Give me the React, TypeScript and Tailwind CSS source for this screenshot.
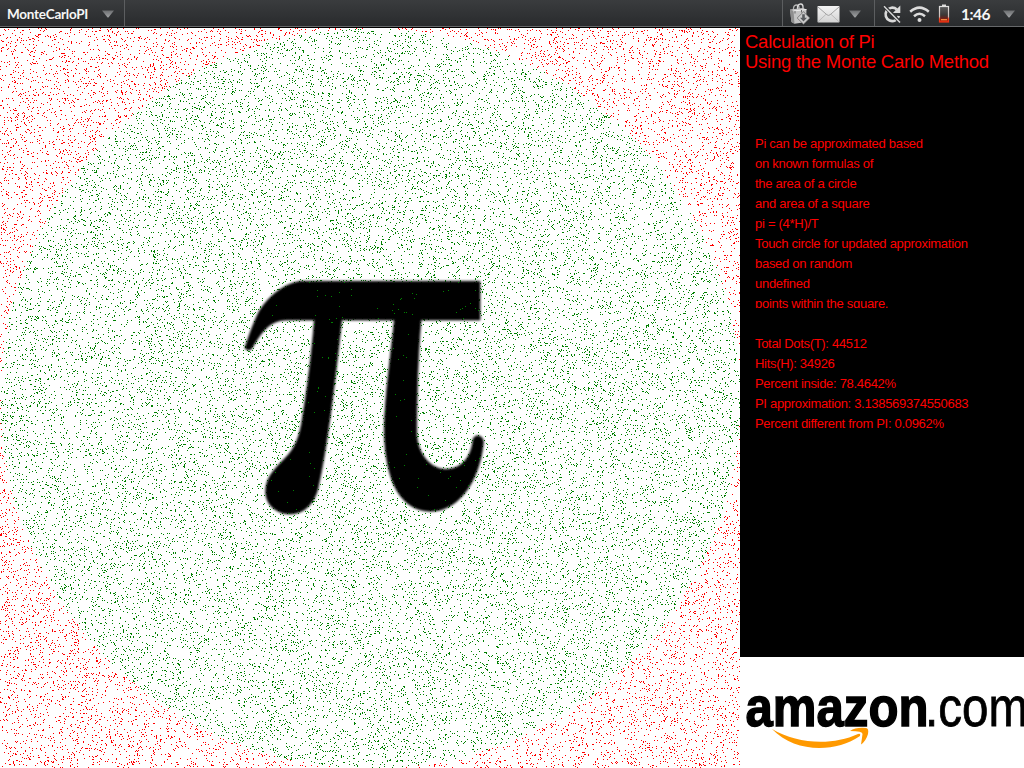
import React from "react";

const SIZE = 740;
const RADIUS = SIZE / 2;

function createRandom(seed: number) {
  let s = seed;
  return () => {
    s = (s + 0x6d2b79f5) | 0;
    let t = Math.imul(s ^ (s >>> 15), 1 | s);
    t = (t + Math.imul(t ^ (t >>> 7), 61 | t)) ^ t;
    return ((t ^ (t >>> 14)) >>> 0) / 4294967296;
  };
}

function sample(count: number, seed: number) {
  const random = createRandom(seed);
  const hits: string[] = [];
  const misses: string[] = [];
  for (let i = 0; i < count; i++) {
    const x = Math.floor(random() * SIZE);
    const y = Math.floor(random() * SIZE);
    const inside = Math.hypot(x - RADIUS, y - RADIUS) <= RADIUS;
    (inside ? hits : misses).push(`M${x} ${y}h1v1h-1z`);
  }
  return { hits: hits.join(""), misses: misses.join("") };
}

const early = sample(36500, 31);
const late = sample(2500, 77);

const PI_PATH =
  "M735 34L195 34C135 45 95 88 72 125C50 170 40 205 30 232C30 241 45 242 50 236C70 205 95 150 155 150L238 150C232 240 215 370 203 440C195 500 180 535 150 565C115 600 92 625 92 665C92 705 125 732 165 732C215 732 245 690 252 640C275 540 300 340 320 150L478 150C470 240 450 370 448 480C450 640 500 722 585 724C680 724 735 620 745 520C748 495 720 490 714 508C710 560 680 598 632 598C580 598 545 540 545 490C545 370 550 240 558 150L735 150Z";

function Board() {
  return (
    <svg className="block h-[740px] w-[740px] shrink-0 bg-white" viewBox="0 0 740 740">
      <defs>
        <filter id="soft" x="-5%" y="-5%" width="110%" height="110%">
          <feGaussianBlur stdDeviation="2.8" />
        </filter>
      </defs>
      <g shapeRendering="crispEdges">
        <path d={early.hits} fill="#008000" />
        <path d={early.misses} fill="#ff0000" />
      </g>
      <g transform="translate(235 242) scale(.33333)">
        <path d={PI_PATH} fill="#000" stroke="#000" strokeWidth="2" filter="url(#soft)" />
      </g>
      <g shapeRendering="crispEdges">
        <path d={late.hits} fill="#008000" />
        <path d={late.misses} fill="#ff0000" />
      </g>
    </svg>
  );
}

function Caret() {
  return (
    <svg className="block h-2 w-3 shrink-0" viewBox="0 0 12 8">
      <defs>
        <linearGradient id="caret" x1="0" y1="0" x2="0" y2="1">
          <stop offset="0" stopColor="#6c6e70" />
          <stop offset="1" stopColor="#a2a4a6" />
        </linearGradient>
      </defs>
      <path d="M0 .5h12L6.6 7.2Q6 7.8 5.4 7.2Z" fill="url(#caret)" />
    </svg>
  );
}

function BagIcon() {
  return (
    <svg className="block h-[22px] w-[22px] shrink-0" viewBox="0 0 22 22">
      <path d="M4.500 8V5Q5 2 7.500 2T10 4.500V7" fill="none" stroke="#b5b5b5" strokeWidth="1.3" />
      <path d="M8.500 6V3.500Q9.500 .8 11.800 1T14 4V7" fill="none" stroke="#d8d8d8" strokeWidth="1.3" />
      <path d="M1 6.500L14 5L17.500 6.500L17 19L5.500 20.800L2.500 19Z" fill="#c4c4c4" />
      <path d="M1 6.500L4.500 8L5.500 20.800L2.500 19Z" fill="#8e8e8e" />
      <path d="M4.500 8L17.500 6.500" stroke="#ededed" />
      <path d="M6 8v2.500M12.500 7v2.500" stroke="#666" />
      <path d="M14.500 8.800L20.800 15L14.500 21.200L8.200 15Z" fill="#cdcdcd" stroke="#6a6a6a" strokeWidth=".8" />
      <path d="M13.200 11.300h2.600v3.500h2.200l-3.500 3.600l-3.500-3.600h2.200Z" fill="#585b5e" />
    </svg>
  );
}

function MailIcon() {
  return (
    <svg className="block h-[17px] w-[23px] shrink-0" viewBox="0 0 23 17">
      <defs>
        <linearGradient id="mail" x1="0" y1="0" x2="0" y2="1">
          <stop offset="0" stopColor="#f4f4f4" />
          <stop offset="1" stopColor="#d2d2d2" />
        </linearGradient>
      </defs>
      <rect x=".5" width="22" height="16.500" rx=".7" fill="url(#mail)" />
      <path d="M1 15.800L9 8.300M22 15.800L14 8.300" stroke="#b5b5b5" strokeWidth=".9" />
      <path d="M1 1L10 8.800Q11.500 10 13 8.800L22 1" fill="none" stroke="#9b9b9b" strokeWidth=".9" />
    </svg>
  );
}

function SyncOffIcon() {
  return (
    <svg className="block h-5 w-5 shrink-0" viewBox="0 0 20 20" fill="none">
      <path d="M14.800 5.400A6.700 6.700 0 1 0 16.800 12" stroke="#dadada" strokeWidth="2.7" />
      <path d="M18.300 1.500V9H10.800Z" fill="#dadada" />
      <path d="M1.500 1.500L18.500 18.500" stroke="#303234" strokeWidth="3.400" />
      <path d="M2 2.200L18 18.500" stroke="#dadada" strokeWidth="1.400" />
    </svg>
  );
}

function WifiIcon() {
  return (
    <svg className="block h-[18px] w-[21px] shrink-0" viewBox="0 0 21 18" fill="none">
      <path d="M1.200 6.800Q10.500-1.500 19.800 6.800M5 11.200Q10.500 6.300 16 11.200" stroke="#dcdcdc" strokeWidth="2.500" />
      <circle cx="10.500" cy="15" r="2" fill="#dcdcdc" />
    </svg>
  );
}

function BatteryIcon() {
  return (
    <svg className="block h-[19px] w-3 shrink-0" viewBox="0 0 12 19">
      <defs>
        <linearGradient id="battery" x1="0" y1="0" x2="0" y2="1">
          <stop offset="0" stopColor="#5a5b5c" />
          <stop offset=".55" stopColor="#3b3836" />
          <stop offset=".75" stopColor="#682019" />
          <stop offset="1" stopColor="#df2709" />
        </linearGradient>
        <linearGradient id="batteryEdge" x1="0" y1="0" x2="0" y2="1">
          <stop offset="0" stopColor="#dedede" />
          <stop offset=".65" stopColor="#cbbab6" />
          <stop offset=".8" stopColor="#ee4220" />
          <stop offset="1" stopColor="#ee3214" />
        </linearGradient>
      </defs>
      <rect x="4" y=".5" width="4" height="2" fill="#ddd" />
      <rect x="1.500" y="2.500" width="9" height="15.500" fill="url(#battery)" stroke="url(#batteryEdge)" strokeWidth="1.200" />
      <path d="M3 15.700h6" stroke="#ff9440" strokeWidth="1.200" />
    </svg>
  );
}

function StatusBar() {
  return (
    <header className="h-7 bg-black font-['Lato',sans-serif] text-[#f6f6f6]">
      <div className="flex h-[27px] items-center border-b border-[#66686a] bg-gradient-to-b from-[#3a3c3e] to-[#292b2d]">
        <div className="flex h-full w-[125px] items-center border-r border-[#5c5e60] pl-[7px] pt-px">
          <span className="w-[95px] whitespace-nowrap text-[13.5px] font-bold leading-5 tracking-[-0.25px]">MonteCarloPI</span>
          <Caret />
        </div>
        <div className="ml-auto flex h-full w-[92px] items-center border-l border-[#5c5e60] pl-1.5 pt-px">
          <BagIcon />
          <div className="ml-1.5 pt-0.5">
            <MailIcon />
          </div>
          <div className="ml-[9px] pt-px">
            <Caret />
          </div>
        </div>
        <div className="flex h-full w-[150px] items-center border-l border-[#5c5e60] pl-[7px] pt-px">
          <SyncOffIcon />
          <div className="ml-[7px]">
            <WifiIcon />
          </div>
          <div className="ml-2">
            <BatteryIcon />
          </div>
          <span className="ml-[11px] w-[42px] text-[15.5px] font-bold leading-5 tracking-[-0.5px]">1:46</span>
          <Caret />
        </div>
      </div>
    </header>
  );
}

const intro = [
  "Pi can be approximated based",
  "on known formulas of",
  "the area of a circle",
  "and area of a square",
  "pi = (4*H)/T",
  "Touch circle for updated approximation",
  "based on random",
  "undefined",
  "points within the square.",
];

const stats = [
  "Total Dots(T): 44512",
  "Hits(H): 34926",
  "Percent inside: 78.4642%",
  "PI approximation: 3.138569374550683",
  "Percent different from PI: 0.0962%",
];

function Logo() {
  return (
    <svg className="block h-[111px] w-[284px] bg-white" viewBox="740 657 284 111">
      <g fontFamily="Liberation Sans, Arial, sans-serif" fontSize="56" stroke="#000">
        <text x="745.5" y="725.5" fontWeight="700" textLength="183" lengthAdjust="spacingAndGlyphs" strokeWidth="1.4">
          amazon
        </text>
        <text x="925" y="725.5" textLength="103" lengthAdjust="spacingAndGlyphs" strokeWidth=".8">
          .com
        </text>
      </g>
      <path d="M772 729C797 744 832 746 858 734Q861 733 860 736C835 753 795 753 772 729Z" fill="#f90" />
      <path d="M850 731Q856 727 866 728Q869 728 868 734Q866 741 861 744.500Q862 738 862.500 734Q863 731 850 731Z" fill="#f90" />
    </svg>
  );
}

function SidePanel() {
  return (
    <aside className="flex w-[284px] flex-col bg-black font-['Liberation_Sans',Arial,sans-serif] text-[#ff0000]">
      <div className="h-[280px] overflow-hidden">
        <h1 className="h-[106px] pl-[5px] pt-[4px] text-[18.5px] font-normal leading-5 tracking-[-0.25px]">
          Calculation of Pi
          <br />
          Using the Monte Carlo Method
        </h1>
        <div className="pl-[15px] text-[13px] leading-5 tracking-[-0.28px]">
          {intro.map((line) => (
            <p key={line}>{line}</p>
          ))}
        </div>
      </div>
      <div className="pl-[15px] pt-[26px] text-[13px] leading-5 tracking-[-0.31px]">
        {stats.map((line) => (
          <p key={line}>{line}</p>
        ))}
      </div>
      <div className="mt-auto">
        <Logo />
      </div>
    </aside>
  );
}

export default function App() {
  return (
    <div className="h-[768px] w-[1024px] overflow-hidden bg-black">
      <StatusBar />
      <main className="flex h-[740px]">
        <Board />
        <SidePanel />
      </main>
    </div>
  );
}
